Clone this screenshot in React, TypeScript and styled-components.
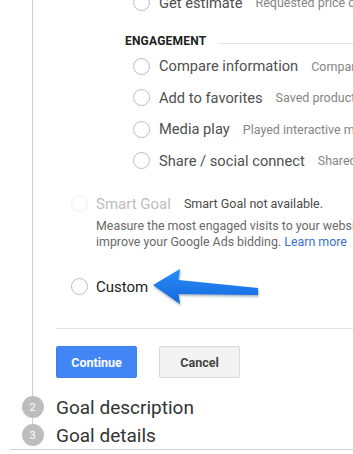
import React from "react";
import styled, { createGlobalStyle } from "styled-components";

const GlobalStyle = createGlobalStyle`
  html, body {
    margin: 0;
    padding: 0;
    background: #fff;
    overflow: hidden;
  }
  body {
    font-family: Roboto, "Liberation Sans", Arial, sans-serif;
    width: 353px;
    height: 454px;
  }
`;

const Page = styled.div`
  width: 353px;
  height: 454px;
  overflow: hidden;
`;

const StepBody = styled.div`
  margin-top: -13px;
  margin-left: 32px;
  border-left: 1px solid #cfcfcf;
  padding: 0 0 15px 23px;
`;

const Group = styled.div`
  margin-left: 69px;
`;

const GroupHeader = styled.div`
  display: flex;
  align-items: center;
  height: 16px;
  margin: 14px 0 2px;
  font-size: 12px;
  font-weight: 700;
  color: #212121;
  letter-spacing: 0.2px;

  &::after {
    content: "";
    flex: 1;
    height: 1px;
    margin: 5px 0 0 12px;
    background: #e3e3e3;
  }
`;

const OptionRow = styled.div<{ $height?: number; $indent?: number }>`
  position: relative;
  display: flex;
  align-items: center;
  height: ${(p) => p.$height ?? 31.5}px;
  padding-left: ${(p) => p.$indent ?? 8}px;
  white-space: nowrap;
`;

const Radio = styled.span<{ $disabled?: boolean }>`
  flex: none;
  box-sizing: border-box;
  width: 17px;
  height: 17px;
  border-radius: 50%;
  border: 1px solid ${(p) => (p.$disabled ? "#f0f0f0" : "#bdbdbd")};
  background: #fff;
`;

const Label = styled.span<{ $tone?: "normal" | "dark" | "muted" }>`
  margin-left: ${(p) => (p.$tone === "normal" ? 9 : 8)}px;
  font-size: ${(p) => (p.$tone === "normal" ? 14.7 : 15)}px;
  color: ${(p) =>
    p.$tone === "dark" ? "#222" : p.$tone === "muted" ? "#bdbdbd" : "#4f4f4f"};
`;

const Hint = styled.span<{ $strong?: boolean }>`
  margin-left: 13px;
  font-size: 12.5px;
  color: ${(p) => (p.$strong ? "#4a4a4a" : "#858585")};
`;

const SmartBlock = styled.div`
  margin-top: 15px;
`;

const SmartText = styled.p`
  margin: 2.5px 0 0 40px;
  font-size: 12.4px;
  line-height: 16px;
  color: #6a6a6a;
  white-space: nowrap;
`;

const Link = styled.a`
  color: #3a72c9;
  text-decoration: none;
`;

const CustomRow = styled(OptionRow)`
  margin-top: 24.5px;
`;

const Pointer = styled.svg`
  position: absolute;
  left: 94px;
  top: -8.5px;
  width: 115px;
  height: 42px;
  overflow: visible;
`;

const Divider = styled.div`
  margin-top: 29.5px;
  height: 1px;
  background: #e3e3e3;
`;

const Actions = styled.div`
  display: flex;
  gap: 22px;
  margin-top: 17px;
`;

const Button = styled.button<{ $primary?: boolean }>`
  box-sizing: border-box;
  width: 81px;
  height: 32px;
  border-radius: 2px;
  font-family: Roboto, "Liberation Sans", Arial, sans-serif;
  font-size: 12.5px;
  font-weight: 700;
  cursor: pointer;
  border: 1px solid ${(p) => (p.$primary ? "#3f80ee" : "#dadada")};
  background: ${(p) => (p.$primary ? "#4285f4" : "#f3f3f3")};
  color: ${(p) => (p.$primary ? "#fff" : "#444")};
`;

const StepRow = styled.div`
  display: flex;
  align-items: stretch;
  height: 28px;
  padding-left: 22px;
`;

const Rail = styled.div`
  display: flex;
  flex-direction: column;
  align-items: center;
  width: 21px;
`;

const Segment = styled.div<{ $hidden?: boolean }>`
  flex: 1;
  width: 1px;
  background: ${(p) => (p.$hidden ? "transparent" : "#cfcfcf")};
`;

const StepNumber = styled.div`
  flex: none;
  width: 22px;
  height: 22px;
  border-radius: 50%;
  background: #bdbdbd;
  color: #fff;
  font-size: 11px;
  display: flex;
  align-items: center;
  justify-content: center;
`;

const StepTitle = styled.div`
  display: flex;
  align-items: center;
  margin-left: 13px;
  font-size: 19px;
  color: #333;
`;

const BottomRule = styled.div`
  margin-left: 10px;
  height: 1px;
  background: #d0d0d0;
`;

const options = [
  ["Get estimate", "Requested price quote"],
  ["Compare information", "Compared features or pricing"],
  ["Add to favorites", "Saved product or information to a list"],
  ["Media play", "Played interactive media, like a video"],
  ["Share / social connect", "Shared to a social network or emailed"],
];

export default function App() {
  return (
    <Page>
      <GlobalStyle />
      <StepBody>
        <Group>
          {options.slice(0, 1).map(([label, hint]) => (
            <OptionRow key={label}>
              <Radio />
              <Label $tone="normal">{label}</Label>
              <Hint>{hint}</Hint>
            </OptionRow>
          ))}
          <GroupHeader>ENGAGEMENT</GroupHeader>
          {options.slice(1).map(([label, hint]) => (
            <OptionRow key={label}>
              <Radio />
              <Label $tone="normal">{label}</Label>
              <Hint>{hint}</Hint>
            </OptionRow>
          ))}
        </Group>

        <SmartBlock>
          <OptionRow $height={24} $indent={15}>
            <Radio $disabled />
            <Label $tone="muted">Smart Goal</Label>
            <Hint $strong>Smart Goal not available.</Hint>
          </OptionRow>
          <SmartText>
            Measure the most engaged visits to your website and use them to
            <br />
            improve your Google Ads bidding. <Link href="#">Learn more</Link>
          </SmartText>
        </SmartBlock>

        <CustomRow $height={24} $indent={15}>
          <Radio />
          <Label $tone="dark">Custom</Label>
          <Pointer viewBox="0 0 115 42">
            <defs>
              <linearGradient id="arrowFill" x1="0" y1="0" x2="0" y2="1">
                <stop offset="0" stopColor="#2a8cf7" />
                <stop offset="1" stopColor="#1668dc" />
              </linearGradient>
              <filter id="arrowShadow" x="-10%" y="-20%" width="130%" height="160%">
                <feDropShadow dx="0.5" dy="1.5" stdDeviation="1.2" floodColor="#1b3a66" floodOpacity="0.45" />
              </filter>
            </defs>
            <path
              d="M3 19 L30 3 L28.5 14 L108 22 L108 29 L28.5 28 L30 38 Z"
              fill="url(#arrowFill)"
              filter="url(#arrowShadow)"
            />
          </Pointer>
        </CustomRow>

        <Divider />

        <Actions>
          <Button $primary>Continue</Button>
          <Button>Cancel</Button>
        </Actions>
      </StepBody>

      <StepRow>
        <Rail>
          <Segment />
          <StepNumber>2</StepNumber>
          <Segment />
        </Rail>
        <StepTitle>Goal description</StepTitle>
      </StepRow>
      <StepRow>
        <Rail>
          <Segment />
          <StepNumber>3</StepNumber>
          <Segment $hidden />
        </Rail>
        <StepTitle>Goal details</StepTitle>
      </StepRow>
      <BottomRule />
    </Page>
  );
}
